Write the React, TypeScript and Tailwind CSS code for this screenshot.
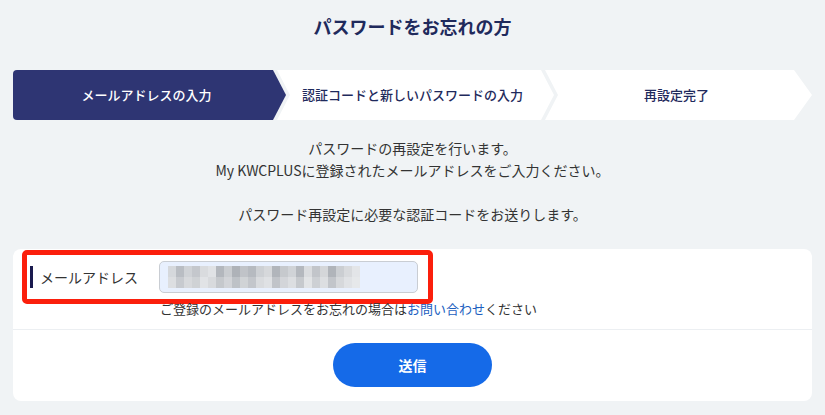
import React from "react";

const font = { fontFamily: '"Noto Sans CJK JP", "Noto Sans", sans-serif' };

const mosaic: string[][] = [
  ["#d5d8dc", "#b9bdc3", "#cfd2d6", "#c4c7cc", "#d9dbde", "#e0e2e5", "#b3b7bd", "#c9ccd0", "#aeb2b8", "#c0c3c8", "#b6bac0", "#cdd0d4", "#d6d8db", "#b1b5bb", "#c6c9cd", "#d0d3d7", "#b4b8be", "#dadcdf", "#c2c5ca", "#d4d6d9", "#b0b4ba", "#cbced2", "#d8dadd", "#e3e5e8"],
  ["#dcdee1", "#c7cacf", "#d7d9dc", "#cfd2d5", "#e1e3e6", "#d8dadd", "#c5c8cc", "#d2d4d8", "#bec2c7", "#d0d3d6", "#c3c6cb", "#d9dbde", "#dfe1e4", "#c1c4c9", "#d3d5d9", "#dcdee1", "#c6c9cd", "#e2e4e6", "#cdd0d4", "#dcdee1", "#c2c5ca", "#d6d8db", "#e0e2e5", "#e6e8ea"],
];

export default function App() {
  return (
    <div className="w-[825px] h-[415px] bg-[#f0f3f5] overflow-hidden" style={font}>
      <h1 className="pt-[13px] text-center text-[18px] leading-[26px] font-bold text-[#1f2a5c]">
        パスワードをお忘れの方
      </h1>

      <div className="mt-[31px] px-[13px] flex h-[50px]">
        <div
          className="w-[273px] h-full bg-[#2e3573] rounded-l-[4px] flex items-center justify-center pr-[6px] text-white text-[13px] font-medium"
          style={{ clipPath: "polygon(0 0, calc(100% - 13px) 0, 100% 50%, calc(100% - 13px) 100%, 0 100%)" }}
        >
          メールアドレスの入力
        </div>
        <div
          className="ml-[-9px] w-[277px] h-full bg-white flex items-center justify-center pr-[6px] text-[#1f2a5c] text-[13px] font-medium"
          style={{ clipPath: "polygon(0 0, calc(100% - 13px) 0, 100% 50%, calc(100% - 13px) 100%, 0 100%, 13px 50%)" }}
        >
          認証コードと新しいパスワードの入力
        </div>
        <div
          className="ml-[-9px] flex-1 h-full bg-white flex items-center justify-center pr-[4px] text-[#1f2a5c] text-[13px] font-medium"
          style={{ clipPath: "polygon(0 0, calc(100% - 18px) 0, 100% 50%, calc(100% - 18px) 100%, 0 100%, 13px 50%)" }}
        >
          再設定完了
        </div>
      </div>

      <div className="mt-[17px] text-center text-[14px] leading-[22px] text-[#333]">
        <p>パスワードの再設定を行います。</p>
        <p>My KWCPLUSに登録されたメールアドレスをご入力ください。</p>
        <p>&nbsp;</p>
        <p>パスワード再設定に必要な認証コードをお送りします。</p>
      </div>

      <div className="mx-[13px] mt-[24px] w-[799px] h-[152px] bg-white rounded-[8px] flex flex-col">
        <div className="px-[9px] pt-[1px] h-[81px] border-b border-[#eceff2]">
          <div className="w-[411px] h-[54px] border-[5px] border-[#fb1f0c] rounded-[5px] flex items-center pl-[3px] pr-[10px]">
            <div className="w-[3px] h-[22px] bg-[#1a1a4e]" />
            <span className="ml-[7px] w-[119px] text-[14px] text-[#333]">メールアドレス</span>
            <div className="flex-1 h-[32px] bg-[#e8f0fe] border border-[#c9cdd3] rounded-[5px] flex items-center pl-[8px]">
              <div className="flex flex-col">
                {mosaic.map((row, i) => (
                  <div key={i} className="flex">
                    {row.map((c, j) => (
                      <div key={j} className="w-[8px] h-[11px]" style={{ backgroundColor: c }} />
                    ))}
                  </div>
                ))}
              </div>
            </div>
          </div>
          <p className="ml-[138px] mt-[-4px] text-[13px] leading-[18px] text-[#333]">
            ご登録のメールアドレスをお忘れの場合は<span className="text-[#1d5fbf]">お問い合わせ</span>ください
          </p>
        </div>
        <div className="flex justify-center pt-[13px]">
          <button className="w-[159px] h-[44px] rounded-full bg-[#156ae8] text-white text-[14px] font-bold">
            送信
          </button>
        </div>
      </div>
    </div>
  );
}
